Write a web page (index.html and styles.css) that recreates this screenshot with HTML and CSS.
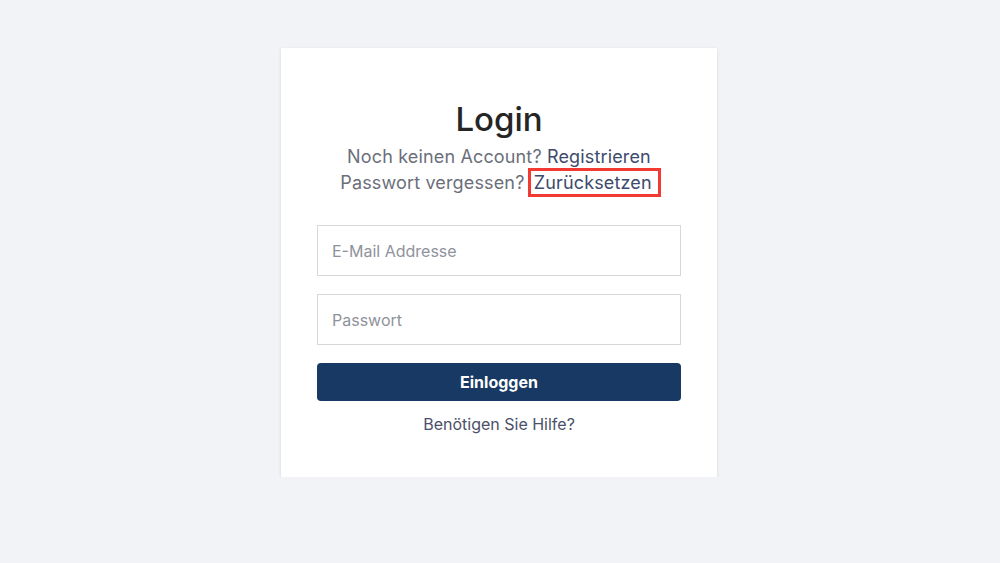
FILE: index.html
```html
<!DOCTYPE html>
<html lang="de">
<head>
    <meta charset="UTF-8">
    <meta name="viewport" content="width=device-width, initial-scale=1.0">
    <title>Login</title>
    <link rel="stylesheet" href="styles.css">
</head>
<body>
    <div class="login-card">
        <h1>Login</h1>

        <p class="login-links">
            Noch keinen Account? <a href="#">Registrieren</a><br>
            Passwort vergessen? <a href="#" class="highlight">Zurücksetzen</a>
        </p>

        <form class="login-form">
            <input type="email" placeholder="E-Mail Addresse">
            <input type="password" placeholder="Passwort">
            <button type="submit">Einloggen</button>
        </form>

        <a href="#" class="help-link">Benötigen Sie Hilfe?</a>
    </div>
</body>
</html>
```

FILE: styles.css
```css
body {
    font-family: Inter, "Noto Sans", sans-serif;
    background: #f2f3f7;
    margin: 0;
    padding: 48px 0 0;
    display: flex;
    justify-content: center;
}

.login-card {
    width: 436px;
    box-sizing: border-box;
    padding: 51px 36px 43px;
    margin-right: 2px;
    background-color: #fff;
    box-shadow: 0 1px 3px rgba(0, 0, 0, 0.12);
    text-align: center;
}

h1 {
    font-size: 33px;
    font-weight: 500;
    color: #252525;
    margin: 0 0 5px;
    line-height: 40px;
}

.login-links {
    font-size: 18px;
    line-height: 26px;
    letter-spacing: 0.15px;
    color: #6b6f7a;
    margin: 0 0 29px;
}

.login-links a {
    color: #3e4a6b;
    text-decoration: none;
}

.login-links .highlight {
    outline: 3px solid #f23a33;
    padding: 1px 6px 1px 3px;
    margin-left: 1px;
}

.login-form {
    display: flex;
    flex-direction: column;
    gap: 18px;
}

.login-form input {
    height: 51px;
    box-sizing: border-box;
    border: 1px solid #d8d8d8;
    padding: 0 14px;
    font-family: inherit;
    font-size: 16px;
    color: #333;
    outline: none;
}

.login-form input::placeholder {
    color: #8f929b;
}

.login-form button {
    height: 38px;
    border: none;
    border-radius: 4px;
    background-color: #183963;
    color: #fff;
    font-family: inherit;
    font-size: 16px;
    font-weight: 700;
    cursor: pointer;
}

.help-link {
    display: inline-block;
    margin-top: 13px;
    font-size: 16px;
    color: #4b5068;
    text-decoration: none;
}
```
